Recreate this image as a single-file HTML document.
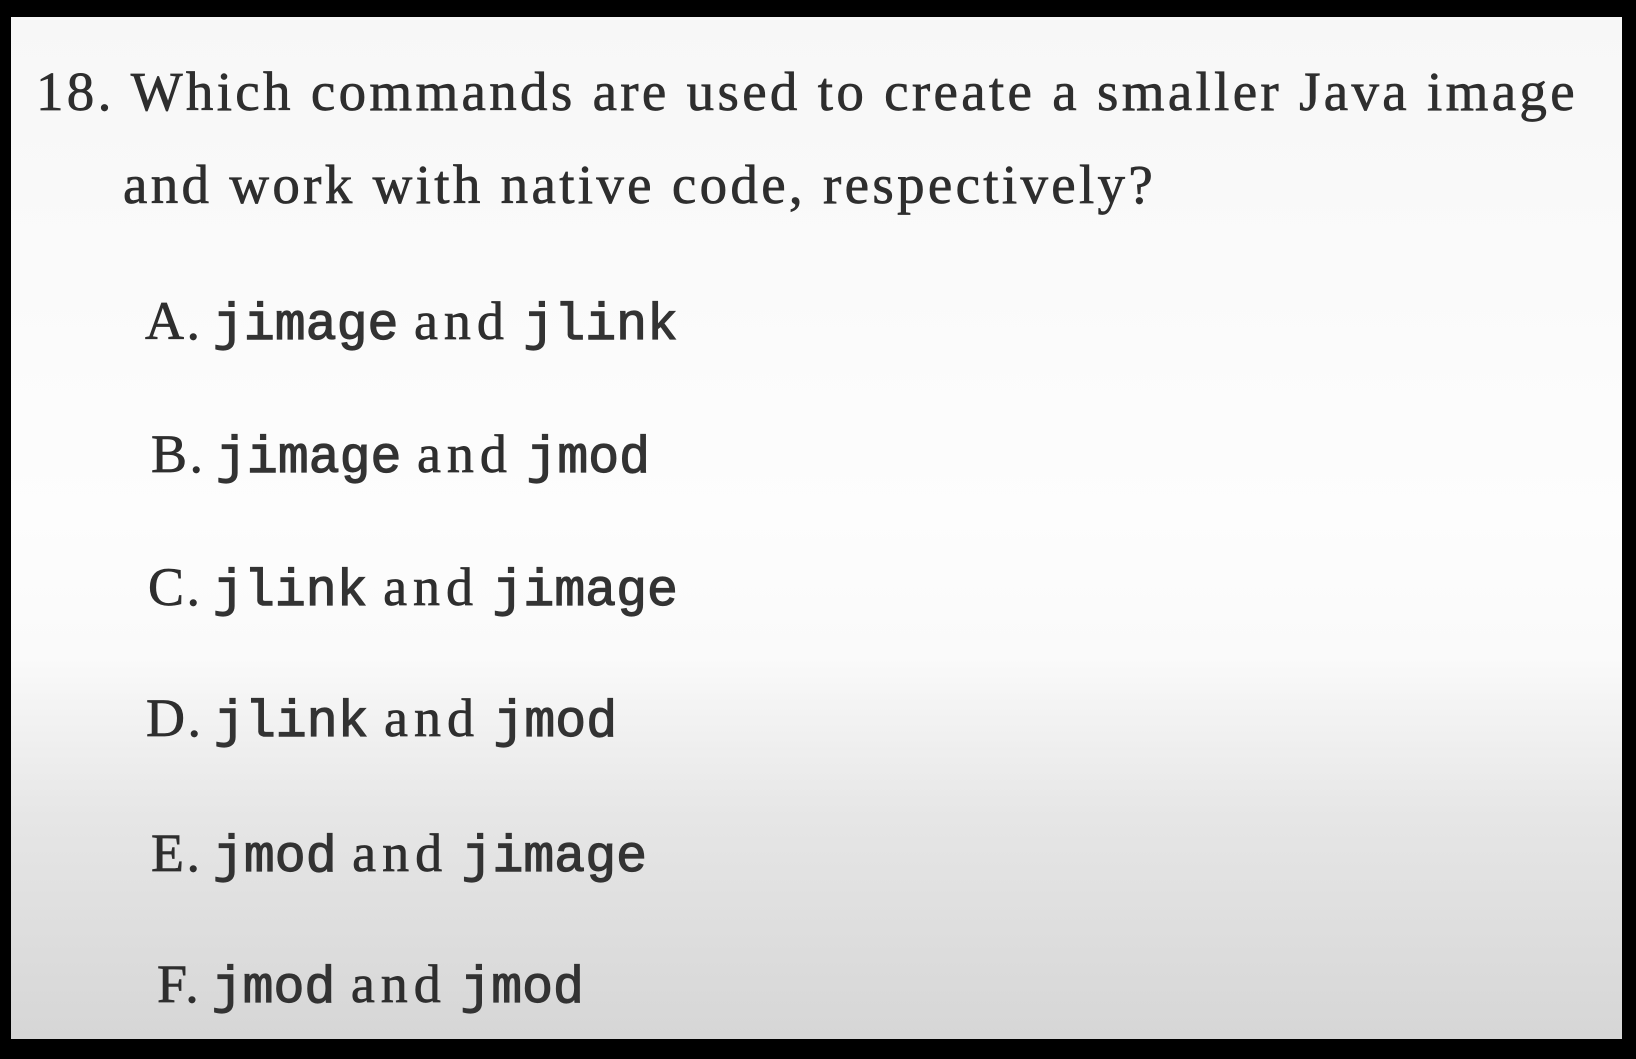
<!DOCTYPE html>
<html><head><meta charset="utf-8"><style>
html,body{margin:0;padding:0;width:1636px;height:1059px;background:#000;overflow:hidden}
#card{position:absolute;left:11px;top:17px;width:1611px;height:1022px;
background:linear-gradient(to bottom,#f7f7f7 0px,#fdfdfd 500px,#fafafa 640px,#e6e6e6 800px,#d6d6d6 1022px)}
.t{position:absolute;line-height:1;white-space:nowrap;color:#2e2e2e;font-family:"Liberation Serif",serif;-webkit-text-stroke:0.7px #2e2e2e}
.q{font-size:55px;letter-spacing:3.3px}
.o{font-size:54px;letter-spacing:0}
.l{letter-spacing:2.5px;margin-right:-3px}
.a{letter-spacing:6px;margin-left:2px;margin-right:0}
.m{font-family:"Liberation Mono",monospace;font-size:51.5px;letter-spacing:0;color:#333;-webkit-text-stroke:1.2px #333}
</style></head><body>
<div id="card"></div>
<div class="t q" style="left:36px;top:64px">18. Which commands are used to create a smaller Java image</div>
<div class="t q" style="left:123px;top:157px">and work with native code, respectively?</div>
<div class="t o" style="left:145px;top:294px"><span class="l">A.</span> <span class="m">jimage</span> <span class="a">and</span> <span class="m">jlink</span></div>
<div class="t o" style="left:151px;top:427px"><span class="l">B.</span> <span class="m">jimage</span> <span class="a">and</span> <span class="m">jmod</span></div>
<div class="t o" style="left:148px;top:560px"><span class="l">C.</span> <span class="m">jlink</span> <span class="a">and</span> <span class="m">jimage</span></div>
<div class="t o" style="left:146px;top:691px"><span class="l">D.</span> <span class="m">jlink</span> <span class="a">and</span> <span class="m">jmod</span></div>
<div class="t o" style="left:151px;top:826px"><span class="l">E.</span> <span class="m">jmod</span> <span class="a">and</span> <span class="m">jimage</span></div>
<div class="t o" style="left:157px;top:957px"><span class="l">F.</span> <span class="m">jmod</span> <span class="a">and</span> <span class="m">jmod</span></div>
</body></html>
